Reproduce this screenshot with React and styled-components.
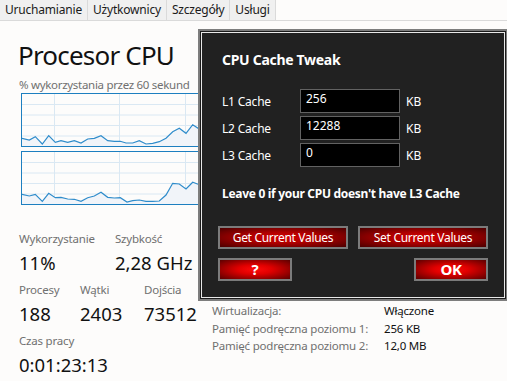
import React from 'react'
import styled, { createGlobalStyle } from 'styled-components'

const tabs = ['Uruchamianie', 'Użytkownicy', 'Szczegóły', 'Usługi']

const graph1 = [
  [0, 44.3], [7.3, 46], [13.3, 42.7], [20.3, 50], [26.7, 41.7], [33.3, 48.3], [39, 46.7],
  [45.7, 48.3], [52.3, 46.7], [59, 49], [65.7, 45], [72.3, 44.3], [79, 41.7], [85.7, 46.7],
  [92.3, 47.3], [98.3, 47.3], [104, 49], [110.7, 49], [117.3, 46.7], [124, 50], [130.7, 49.3],
  [137.3, 47.7], [144, 44.3], [150.7, 37.7], [157.3, 34.3], [164, 39.3], [170.7, 30.7],
  [177.3, 35], [180.7, 34.3], [190, 36], [200, 33], [215, 38], [230, 35], [260, 37], [300, 36],
]

const graph2 = [
  [0, 42.3], [7.3, 44], [13.3, 42.3], [20.3, 49.3], [26.7, 41.3], [33.3, 45.7], [39, 45.3],
  [45.7, 47], [52.3, 47.3], [59, 49.3], [65.7, 45.7], [72.3, 44], [79, 40.3], [85.7, 45.3],
  [92.3, 46], [98.3, 45.7], [105, 50], [110.7, 48.7], [117.3, 48], [124, 49.3], [130.7, 49.3],
  [137.3, 49], [144, 43], [150.7, 31.3], [157.3, 32], [164, 37], [170.7, 30.3], [177.3, 32.7],
  [180.7, 31.3], [190, 34], [200, 31], [215, 35], [230, 33], [260, 34], [300, 33],
]

const CpuGraph = ({ points }) => {
  const line = points.map(([x, y]) => `${x},${y}`).join(' ')
  const area = `0,52 ${line} 300,52`
  return (
    <GraphBox>
      <svg width="300" height="52" viewBox="0 0 300 52">
        {[10.5, 21, 31.5, 42].map((y) => (
          <line key={y} x1="0" x2="300" y1={y} y2={y} stroke="#dae8f3" strokeWidth="1" />
        ))}
        {[32.5, 97.5, 163.5, 229.5].map((x) => (
          <line key={x} x1={x} x2={x} y1="0" y2="52" stroke="#dae8f3" strokeWidth="1" />
        ))}
        <polygon points={area} fill="#f1f4f9" />
        <polyline points={line} fill="none" stroke="#2f8ccb" strokeWidth="1.2" />
      </svg>
    </GraphBox>
  )
}

const App = () => {
  return (
    <Screen>
      <GlobalStyle />
      <TabBar>
        {tabs.map((t) => (
          <Tab key={t}>{t}</Tab>
        ))}
      </TabBar>
      <Content>
        <Title>Procesor CPU</Title>
        <Caption>% wykorzystania przez 60 sekund</Caption>
        <Graphs>
          <CpuGraph points={graph1} />
          <CpuGraph points={graph2} />
        </Graphs>
        <Bottom>
          <Stats>
            <StatRow cols="96px 96px">
              <Stat>
                <StatLabel>Wykorzystanie</StatLabel>
                <StatValue>11%</StatValue>
              </Stat>
              <Stat>
                <StatLabel>Szybkość</StatLabel>
                <StatValue>2,28 GHz</StatValue>
              </Stat>
            </StatRow>
            <StatRow cols="61px 64px 70px">
              <Stat>
                <StatLabel>Procesy</StatLabel>
                <StatValue>188</StatValue>
              </Stat>
              <Stat>
                <StatLabel>Wątki</StatLabel>
                <StatValue>2403</StatValue>
              </Stat>
              <Stat>
                <StatLabel>Dojścia</StatLabel>
                <StatValue>73512</StatValue>
              </Stat>
            </StatRow>
            <StatRow cols="160px">
              <Stat>
                <StatLabel>Czas pracy</StatLabel>
                <StatValue>0:01:23:13</StatValue>
              </Stat>
            </StatRow>
          </Stats>
          <Info>
            <InfoRow>
              <InfoLabel>Wirtualizacja:</InfoLabel>
              <InfoValue>Włączone</InfoValue>
            </InfoRow>
            <InfoRow>
              <InfoLabel>Pamięć podręczna poziomu 1:</InfoLabel>
              <InfoValue>256 KB</InfoValue>
            </InfoRow>
            <InfoRow>
              <InfoLabel>Pamięć podręczna poziomu 2:</InfoLabel>
              <InfoValue>12,0 MB</InfoValue>
            </InfoRow>
          </Info>
        </Bottom>
      </Content>

      <Dialog>
        <DialogInner>
          <DialogTitle>CPU Cache Tweak</DialogTitle>
          <Fields>
            <FieldLabel>L1 Cache</FieldLabel>
            <Field defaultValue="256" />
            <Unit>KB</Unit>
            <FieldLabel>L2 Cache</FieldLabel>
            <Field defaultValue="12288" />
            <Unit>KB</Unit>
            <FieldLabel>L3 Cache</FieldLabel>
            <Field defaultValue="0" />
            <Unit>KB</Unit>
          </Fields>
          <Note>Leave 0 if your CPU doesn't have L3 Cache</Note>
          <Buttons>
            <RedButton>Get Current Values</RedButton>
            <RedButton>Set Current Values</RedButton>
            <RedButton small bright>?</RedButton>
            <RedButton small bright right>OK</RedButton>
          </Buttons>
        </DialogInner>
      </Dialog>
    </Screen>
  )
}

export default App

const GlobalStyle = createGlobalStyle`
  body {
    margin: 0;
    background: #fdfcfb;
    font-family: "Noto Sans", "Open Sans", sans-serif;
  }
`
const Screen = styled.div`
  position: relative;
  width: 507px;
  height: 381px;
  overflow: hidden;
  background: #fdfcfb;
`
const TabBar = styled.div`
  display: flex;
  height: 20px;
  border-bottom: 1px solid #dadada;
`
const Tab = styled.div`
  padding: 0 5px;
  background: #f0f0f0;
  border-right: 1px solid #dadada;
  font-size: 12px;
  line-height: 20px;
  color: #1b1b1b;
  letter-spacing: -0.2px;
`
const Content = styled.div`
  padding-left: 19px;
`
const Title = styled.h1`
  margin: 17px 0 0 -1px;
  font-weight: 400;
  font-size: 26px;
  line-height: 34px;
  color: #111;
  letter-spacing: -0.8px;
`
const Caption = styled.div`
  margin-top: 6px;
  font-size: 11.5px;
  line-height: 14px;
  color: #707070;
  letter-spacing: -0.3px;
`
const Graphs = styled.div`
  display: flex;
  flex-direction: column;
  gap: 4px;
  margin: 1px 0 0 2px;
`
const GraphBox = styled.div`
  width: 300px;
  height: 52px;
  border: 1px solid #1d7fc0;

  svg {
    display: block;
  }
`
const Bottom = styled.div`
  display: flex;
  margin-top: 26px;
`
const Stats = styled.div`
  width: 193px;
  display: flex;
  flex-direction: column;
  gap: 3px;
`
const StatRow = styled.div`
  display: grid;
  grid-template-columns: ${(p) => p.cols};
`
const Stat = styled.div`
  display: flex;
  flex-direction: column;
`
const StatLabel = styled.div`
  font-size: 11.5px;
  line-height: 16px;
  color: #707070;
  letter-spacing: -0.2px;
  white-space: nowrap;
`
const StatValue = styled.div`
  font-size: 18.5px;
  line-height: 32px;
  color: #111;
  white-space: nowrap;
`
const Info = styled.div`
  margin-top: 71px;
  display: flex;
  flex-direction: column;
`
const InfoRow = styled.div`
  display: grid;
  grid-template-columns: 172px auto;
  font-size: 11.5px;
  line-height: 17.5px;
  letter-spacing: -0.2px;
  white-space: nowrap;
`
const InfoLabel = styled.span`
  color: #707070;
`
const InfoValue = styled.span`
  color: #111;
`
const Dialog = styled.div`
  position: absolute;
  left: 198px;
  top: 29px;
  width: 304px;
  height: 266px;
  border: 2px solid #7d7d7d;
  background: #1a1a1a;
  padding: 1px;
`
const DialogInner = styled.div`
  height: 100%;
  box-sizing: border-box;
  border: 1px solid #e8e8e8;
  background: #212121;
  padding: 17px 0 0 20px;
  color: #fff;
`
const DialogTitle = styled.div`
  font-weight: 700;
  font-size: 14px;
  line-height: 20px;
  letter-spacing: -0.3px;
`
const Fields = styled.div`
  display: grid;
  grid-template-columns: 72px 100px auto;
  grid-auto-rows: 24px;
  row-gap: 3px;
  column-gap: 6px;
  align-items: center;
  margin-top: 19px;
`
const FieldLabel = styled.div`
  font-size: 12px;
  letter-spacing: -0.2px;
  white-space: nowrap;
`
const Field = styled.input`
  box-sizing: border-box;
  width: 100px;
  height: 24px;
  margin: 0;
  padding: 0 0 6px 5px;
  background: #000;
  border: 1px solid #626262;
  color: #fff;
  font-family: "Noto Sans", sans-serif;
  font-size: 12px;
  outline: none;
`
const Unit = styled.div`
  font-size: 12px;
`
const Note = styled.div`
  margin-top: 18px;
  font-weight: 700;
  font-size: 12px;
  line-height: 18px;
  letter-spacing: -0.3px;
`
const Buttons = styled.div`
  display: grid;
  grid-template-columns: 130px 130px;
  column-gap: 10px;
  row-gap: 9px;
  margin-top: 23px;
  margin-left: -4px;
`
const RedButton = styled.button`
  box-sizing: border-box;
  width: ${(p) => (p.small ? '74px' : '130px')};
  height: 23px;
  justify-self: ${(p) => (p.right ? 'end' : 'start')};
  border: 2px solid #7b7b7b;
  background: ${(p) =>
    p.bright
      ? 'radial-gradient(ellipse at center, #ff0a0a 0%, #e00000 35%, #8e0000 75%, #5a0000 100%)'
      : 'radial-gradient(ellipse at center, #d40000 0%, #b00000 40%, #6e0000 80%, #4a0000 100%)'};
  color: #fff;
  font-family: "Noto Sans", sans-serif;
  font-size: ${(p) => (p.small ? '15px' : '12px')};
  font-weight: ${(p) => (p.small ? 700 : 400)};
  letter-spacing: -0.3px;
  padding: 0;
  line-height: 1;
`
